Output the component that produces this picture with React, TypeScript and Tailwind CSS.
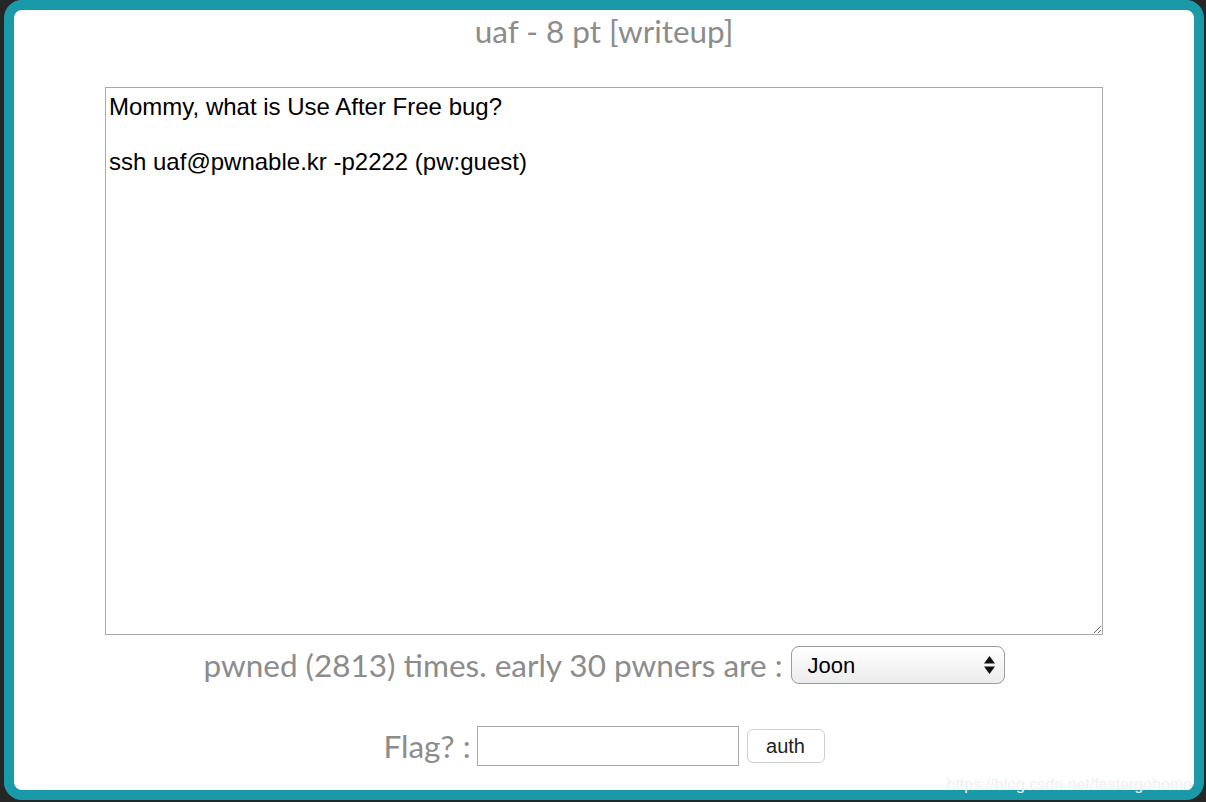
import React from 'react'

export default function App() {
  return (
    <div className="h-[802px] w-[1206px] overflow-hidden bg-[#262626] pl-[4px]">
      <div className="relative h-[800px] w-[1200px] rounded-[18px] border-[10px] border-[#1a99a9] bg-white">
        <div className="flex flex-col items-center pt-[3px]">
          {/* title */}
          <h1 className="font-['Lato',sans-serif] text-[31.5px] leading-[36px] text-[#8c8c8c]">
            uaf - 8 pt [writeup]
          </h1>

          {/* description */}
          <textarea
            readOnly
            className="mt-[38px] h-[548px] w-[998px] border border-[#a9a9a9] px-[3px] pt-[5px] font-['Liberation_Sans',Arial,sans-serif] text-[24px] leading-[27.5px] text-black outline-none"
            defaultValue={'Mommy, what is Use After Free bug?\n\nssh uaf@pwnable.kr -p2222 (pw:guest)'}
          />

          {/* pwners */}
          <div className="mt-[11px] flex items-center gap-[8px]">
            <span className="font-['Lato',sans-serif] text-[31.5px] leading-[36px] text-[#8c8c8c]">
              pwned (2813) times. early 30 pwners are :
            </span>
            <div className="relative">
              <select className="h-[38px] w-[214px] appearance-none rounded-[8px] border border-[#9a9a9a] bg-gradient-to-b from-white to-[#ececec] pl-[16px] font-['Liberation_Sans',Arial,sans-serif] text-[22px] text-black outline-none">
                <option>Joon</option>
              </select>
              <svg className="pointer-events-none absolute right-[9px] top-[9px]" width="13" height="20" viewBox="0 0 13 20">
                <path d="M6.5 1 L12 8.5 L1 8.5 Z" fill="#111" />
                <path d="M1 11.5 L12 11.5 L6.5 19 Z" fill="#111" />
              </svg>
            </div>
          </div>

          {/* flag */}
          <div className="mt-[42px] flex items-center">
            <span className="font-['Lato',sans-serif] text-[31.5px] leading-[36px] text-[#8c8c8c]">Flag? :</span>
            <input className="ml-[6px] h-[40px] w-[262px] border border-[#a9a9a9] px-2 font-['Liberation_Sans',Arial,sans-serif] text-[20px] outline-none" />
            <button className="ml-[8px] h-[34px] w-[78px] rounded-[6px] border border-[#cfcfcf] bg-white font-['Liberation_Sans',Arial,sans-serif] text-[20px] text-[#222]">
              auth
            </button>
          </div>
        </div>

        {/* watermark */}
        <span className="pointer-events-none absolute bottom-[-7px] right-[2px] font-['Liberation_Sans',Arial,sans-serif] text-[16px] text-[#f0f0f0]">
          https://blog.csdn.net/fastergohome
        </span>
      </div>
    </div>
  )
}
